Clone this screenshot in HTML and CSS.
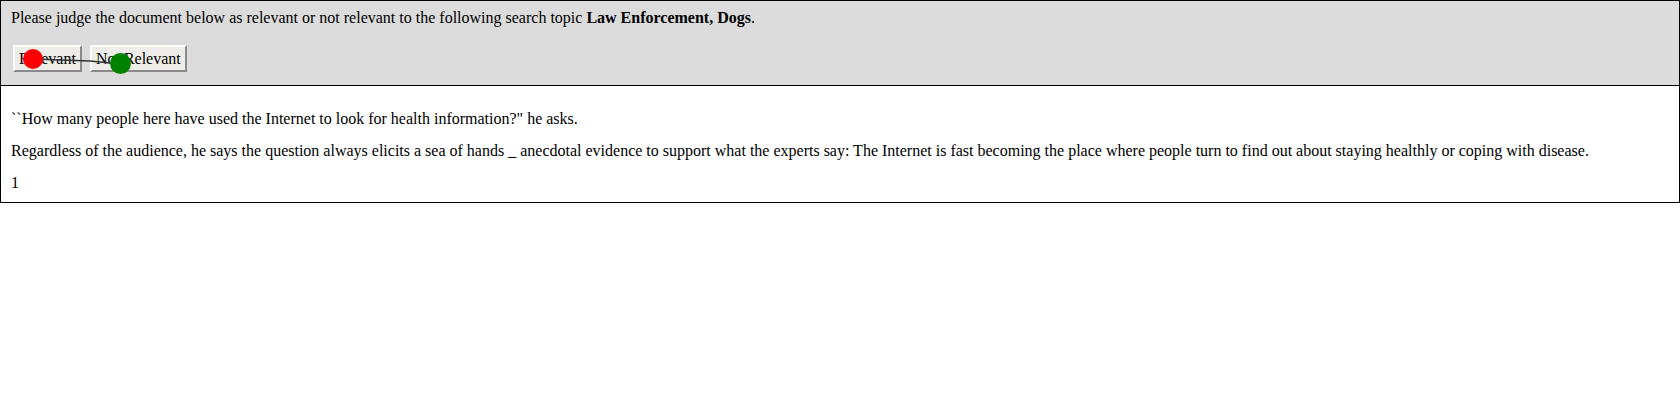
FILE: index.html
```html
<!DOCTYPE html>
<html>
<head>
<meta charset="utf-8">
<link rel="stylesheet" href="styles.css">
</head>
<body>
<div class="frame">
  <div class="header">
    <div class="prompt">Please judge the document below as relevant or not relevant to the following search topic <b>Law Enforcement, Dogs</b>.</div>
    <div class="buttons">
      <button class="btn">Relevant</button>
      <button class="btn">Not Relevant</button>
    </div>
  </div>
  <div class="doc">
    <p>``How many people here have used the Internet to look for health information?&quot; he asks.</p>
    <p>Regardless of the audience, he says the question always elicits a sea of hands _ anecdotal evidence to support what the experts say: The Internet is fast becoming the place where people turn to find out about staying healthly or coping with disease.</p>
    <p>1</p>
  </div>
  <svg class="trail" width="200" height="100" viewBox="0 0 200 100">
    <polyline points="33,59 60,60 90,61 120,64" fill="none" stroke="#333" stroke-width="1.5"/>
    <circle cx="33" cy="59" r="10" fill="#ff0000"/>
    <circle cx="120.5" cy="63.5" r="10.5" fill="#008000"/>
  </svg>
</div>
</body>
</html>
```
FILE: styles.css
```css
html, body {
  margin: 0;
  padding: 0;
  background: #fff;
}
body {
  font-family: "Liberation Serif", "Times New Roman", serif;
  font-size: 16px;
  color: #000;
}
.frame {
  position: relative;
  border: 1px solid #000;
}
.header {
  background: #dcdcdc;
  border-bottom: 1px solid #000;
  padding: 8px 10px 13px 10px;
}
.prompt {
  line-height: 18px;
}
.buttons {
  display: flex;
  gap: 8px;
  margin-top: 18px;
  padding-left: 2px;
}
.btn {
  font-family: "Liberation Serif", "Times New Roman", serif;
  font-size: 16px;
  color: #000;
  height: 27px;
  padding: 0 4px;
  background: #efedea;
  border: 2px solid;
  border-color: #fbfbfa #8a8a8a #8a8a8a #fbfbfa;
  line-height: 22px;
  margin: 0;
}
.doc {
  padding: 24px 10px 10px 10px;
  display: flex;
  flex-direction: column;
  gap: 14px;
}
.doc p {
  margin: 0;
  line-height: 18px;
}
.trail {
  position: absolute;
  left: -1px;
  top: -1px;
  pointer-events: none;
}
```
